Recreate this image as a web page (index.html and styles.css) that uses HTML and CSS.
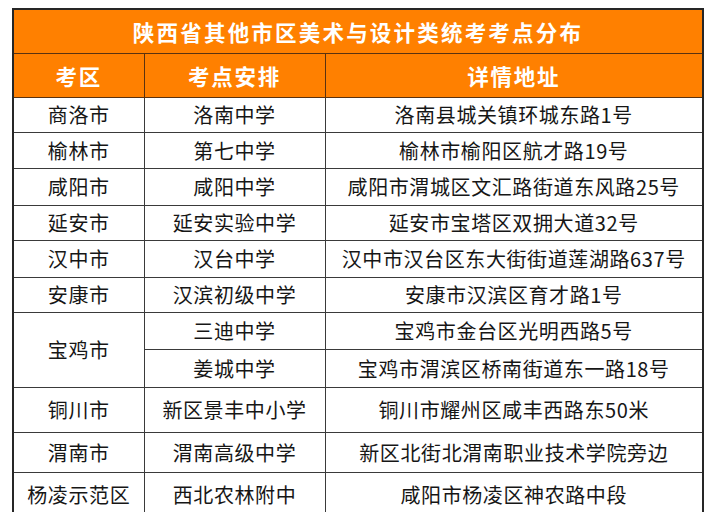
FILE: index.html
```html
<!DOCTYPE html>
<html lang="zh-CN">
<head>
<meta charset="utf-8">
<link rel="stylesheet" href="styles.css">
</head>
<body>
<table class="sites">
  <colgroup>
    <col class="c1"><col class="c2"><col class="c3">
  </colgroup>
  <thead>
    <tr class="title"><th colspan="3">陕西省其他市区美术与设计类统考考点分布</th></tr>
    <tr class="head"><th>考区</th><th>考点安排</th><th>详情地址</th></tr>
  </thead>
  <tbody>
    <tr class="r34"><td>商洛市</td><td>洛南中学</td><td>洛南县城关镇环城东路1号</td></tr>
    <tr class="r36"><td>榆林市</td><td>第七中学</td><td>榆林市榆阳区航才路19号</td></tr>
    <tr class="r37"><td>咸阳市</td><td>咸阳中学</td><td>咸阳市渭城区文汇路街道东风路25号</td></tr>
    <tr class="r35"><td>延安市</td><td>延安实验中学</td><td>延安市宝塔区双拥大道32号</td></tr>
    <tr class="r37"><td>汉中市</td><td>汉台中学</td><td>汉中市汉台区东大街街道莲湖路637号</td></tr>
    <tr class="r35"><td>安康市</td><td>汉滨初级中学</td><td>安康市汉滨区育才路1号</td></tr>
    <tr class="r37"><td rowspan="2">宝鸡市</td><td>三迪中学</td><td>宝鸡市金台区光明西路5号</td></tr>
    <tr class="r38"><td>姜城中学</td><td>宝鸡市渭滨区桥南街道东一路18号</td></tr>
    <tr class="r45"><td>铜川市</td><td>新区景丰中小学</td><td>铜川市耀州区咸丰西路东50米</td></tr>
    <tr class="r40"><td>渭南市</td><td>渭南高级中学</td><td>新区北街北渭南职业技术学院旁边</td></tr>
    <tr class="r45"><td>杨凌示范区</td><td>西北农林附中</td><td>咸阳市杨凌区神农路中段</td></tr>
  </tbody>
</table>
</body>
</html>
```
FILE: styles.css
```css
html, body {
  margin: 0;
  padding: 0;
  background: #ffffff;
}
body {
  padding: 8px 0 0 12px;
  font-family: "Noto Sans CJK SC", "Noto Sans", sans-serif;
  overflow: hidden;
}
.sites {
  border-collapse: collapse;
  width: 690px;
  table-layout: fixed;
  border: 2px solid #262626;
}
.c1 { width: 131px; }
.c2 { width: 181px; }
.c3 { width: 378px; }
.sites th, .sites td {
  border: 1px solid #3a3a3a;
  text-align: center;
  vertical-align: middle;
  padding: 0;
  line-height: 1;
  white-space: nowrap;
}
.sites th {
  background: #ff8000;
  color: #ffffff;
  font-weight: 700;
  font-size: 21.5px;
  letter-spacing: 1.8px;
  border-color: #5a3210;
}
.title th { height: 43px; letter-spacing: 2.2px; }
.head th { height: 43px; }
.sites td {
  color: #161616;
  font-size: 20px;
  font-weight: 400;
  letter-spacing: 0.6px;
}
.r34 td { height: 34px; }
.r35 td { height: 34px; }
.r36 td { height: 35px; }
.r37 td { height: 36px; }
.r38 td { height: 37px; }
.r40 td { height: 39px; }
.r45 td { height: 44px; }
```
